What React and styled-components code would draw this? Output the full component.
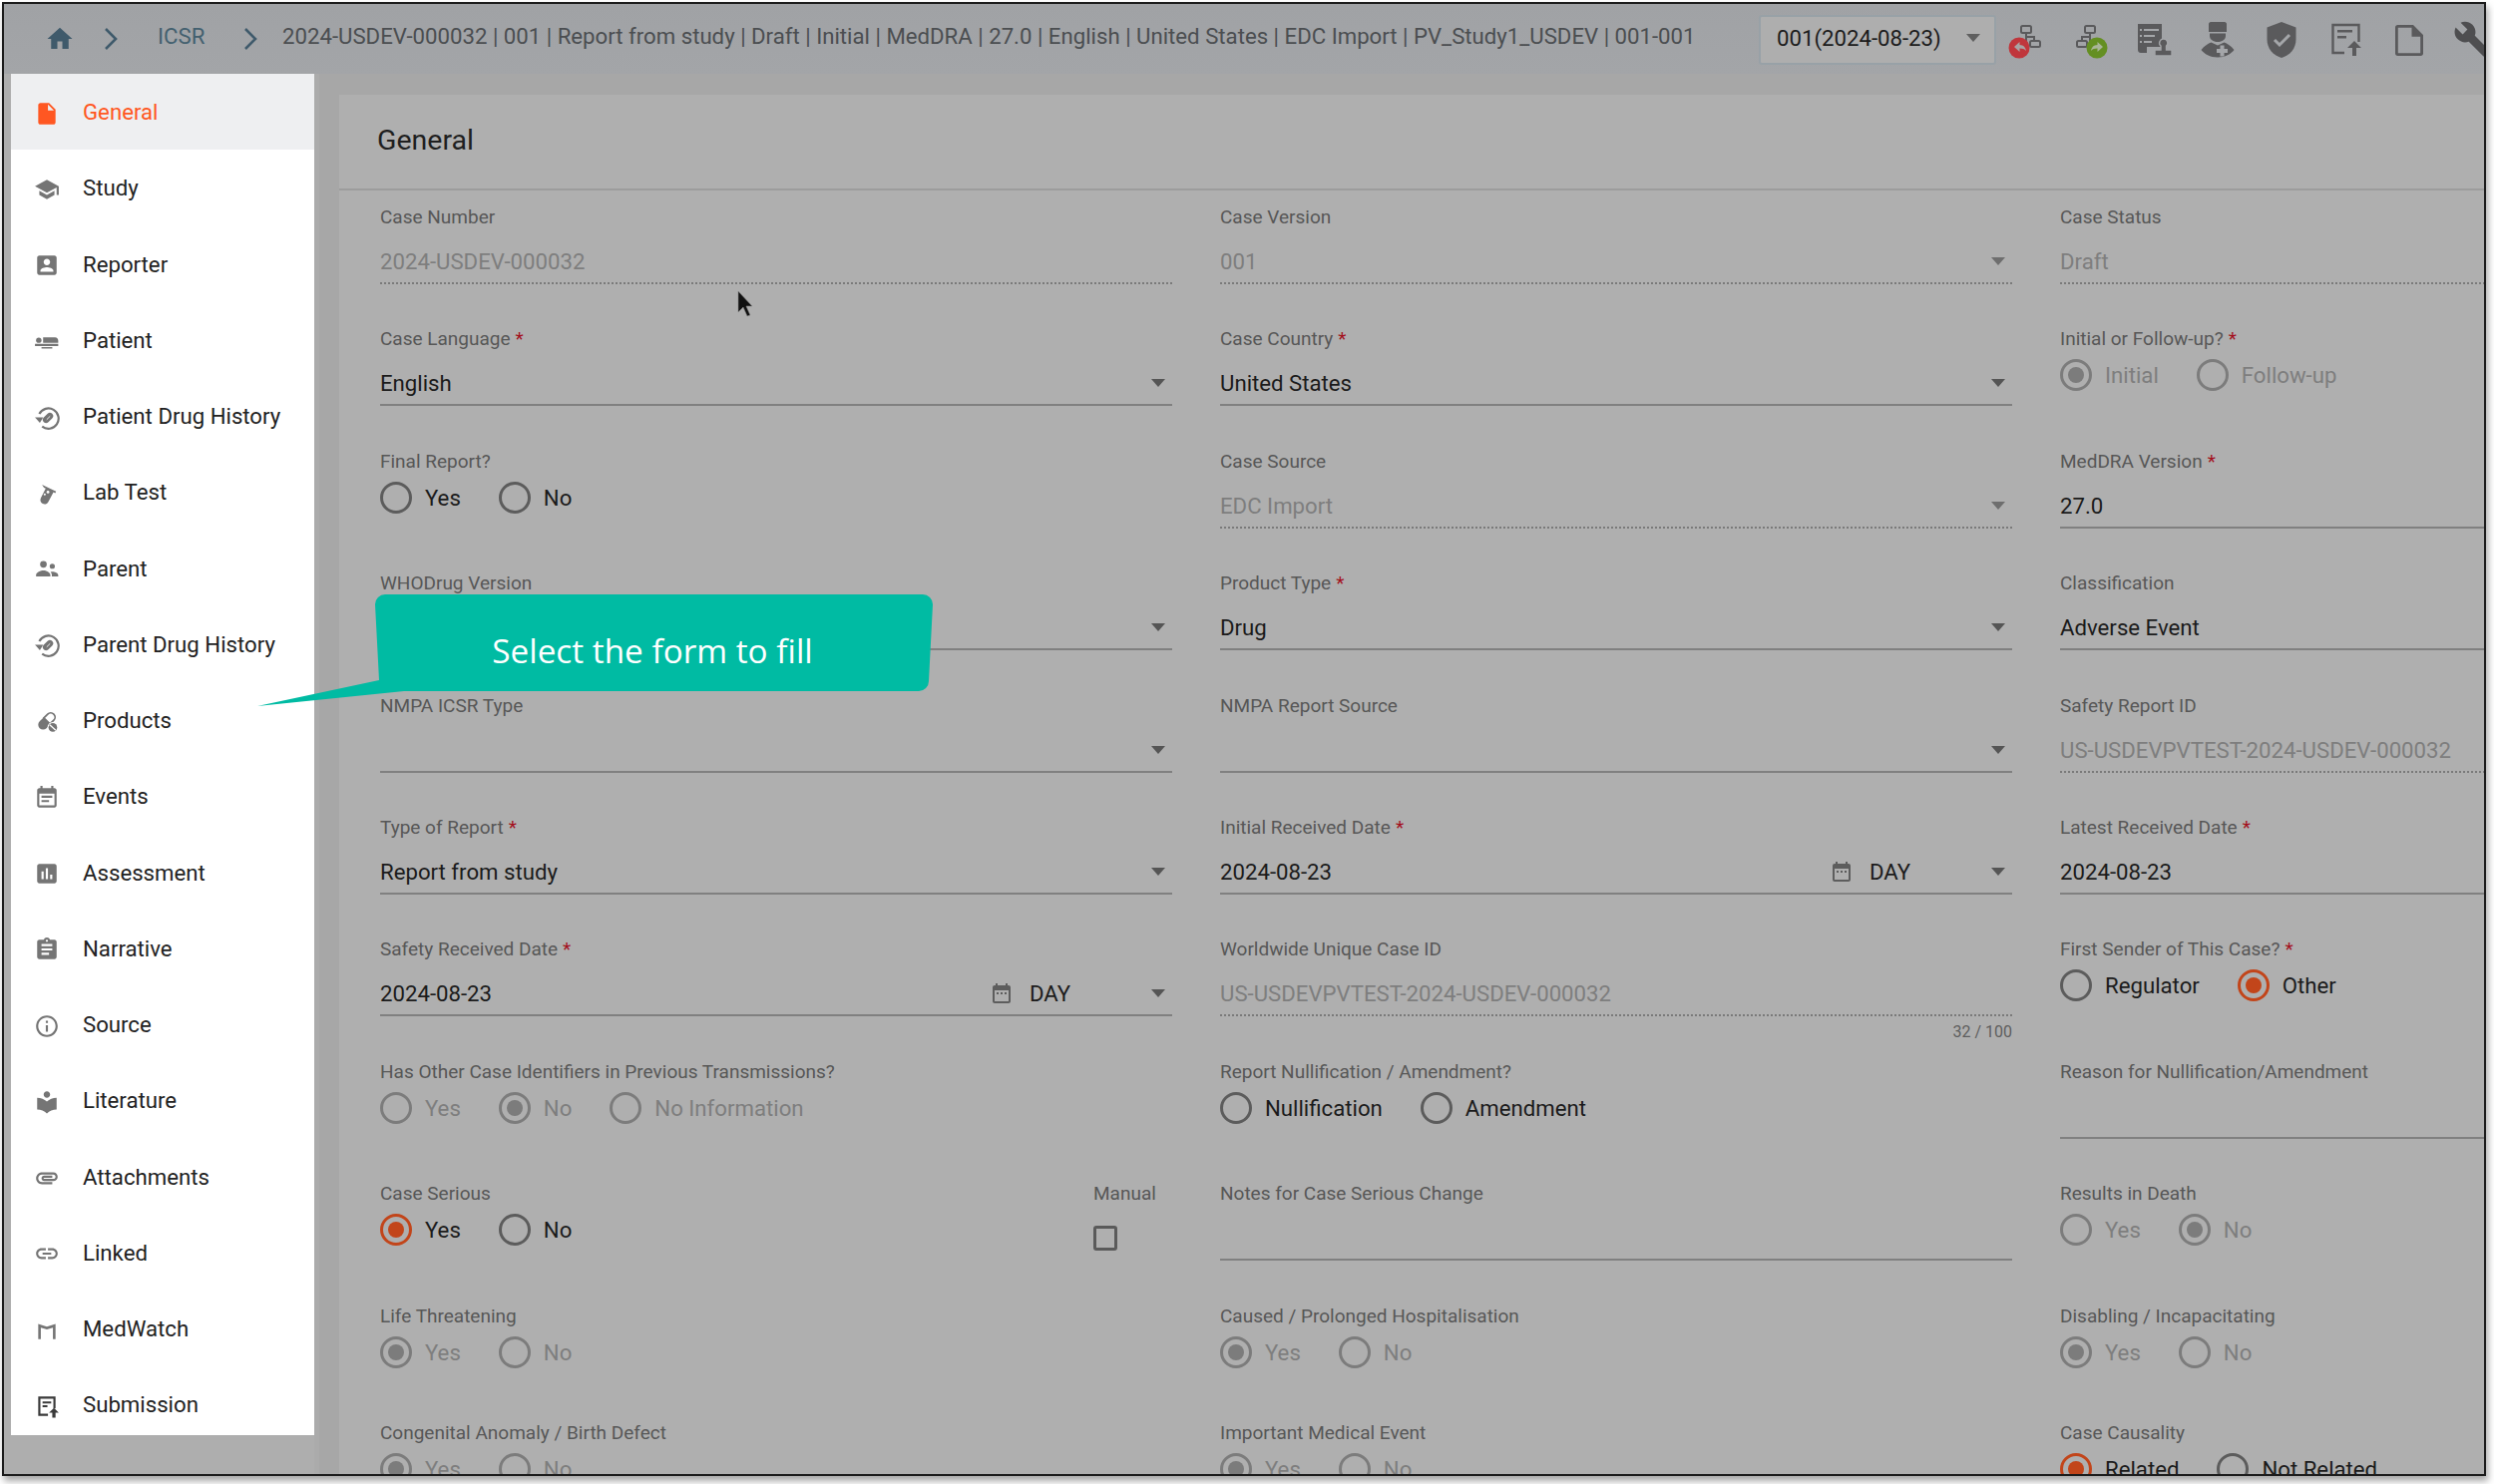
import React from "react";
import styled, { createGlobalStyle } from "styled-components";

const Global = createGlobalStyle`
  html, body { margin: 0; padding: 0; background: #fff; }
  body { font-family: Roboto, "Liberation Sans", sans-serif; }
  * { box-sizing: border-box; }
`;

const Page = styled.div`
  width: 2500px;
  height: 1488px;
  padding: 2px 0 0 2px;
  overflow: hidden;
`;
const Window = styled.div`
  position: relative;
  width: 2490px;
  height: 1478px;
  border: 2px solid #1c1c1c;
  box-shadow: 2px 5px 7px rgba(0, 0, 0, 0.35);
  background: #aeaeae;
  overflow: hidden;
  display: flex;
  flex-direction: column;
`;

/* top bar */
const TopBar = styled.header`
  flex: 0 0 70px;
  display: flex;
  align-items: center;
  padding-left: 41px;
  background: linear-gradient(#a0a2a5, #a3a5a8);
`;
const HomeIcon = styled.svg`
  width: 30px;
  height: 30px;
  fill: #3f5a6b;
  flex: none;
`;
const Chevron = styled.svg`
  width: 14px;
  height: 24px;
  fill: none;
  stroke: #3f5a6b;
  stroke-width: 2.6;
  flex: none;
  margin-left: ${(p) => p.$ml}px;
`;
const Crumb = styled.span`
  font-size: 22.2px;
  color: #43606f;
  margin: 0 0 6px 40px;
  width: 46px;
  flex: none;
`;
const CaseTitle = styled.span`
  flex: 0 0 1480px;
  margin: 0 0 6px 25px;
  font-size: 22.2px;
  color: #4b4e51;
  white-space: nowrap;
`;
const VersionSelect = styled.div`
  flex: 0 0 238px;
  height: 50px;
  margin-top: 1px;
  border: 2px solid #98a1a7;
  border-radius: 3px;
  background: #aeaeae;
  display: flex;
  align-items: center;
  justify-content: space-between;
  padding: 0 14px 4px 16px;
  font-size: 22.2px;
  color: #1c1c1c;
`;
const Caret = styled.span`
  width: 0;
  height: 0;
  flex: none;
  border-left: 7px solid transparent;
  border-right: 7px solid transparent;
  border-top: 8px solid ${(p) => p.$color || "#5f5f5f"};
`;
const ToolIcons = styled.div`
  display: flex;
  flex: none;
  margin-left: -2px;
`;
const ToolCell = styled.div`
  flex: 0 0 64px;
  display: flex;
  justify-content: center;
  padding-top: 1px;
`;
const ToolSvg = styled.svg`
  width: 40px;
  height: 40px;
  flex: none;
`;

/* body */
const Body = styled.div`
  flex: 1;
  min-height: 0;
  display: flex;
`;
const Sidebar = styled.nav`
  flex: 0 0 304px;
  margin-left: 7px;
  height: 1365px;
  background: #fff;
  overflow: hidden;
`;
const NavItem = styled.div`
  height: 76.25px;
  display: flex;
  align-items: center;
  padding-left: 23px;
  background: ${(p) => (p.$active ? "#eeeff1" : "#fff")};
  color: ${(p) => (p.$active ? "#ff5722" : "#222")};
`;
const NavIcon = styled.svg`
  width: 26px;
  height: 26px;
  flex: none;
  margin-top: 3px;
  fill: ${(p) => (p.$active ? "#ff5722" : p.$dark ? "#3a3a3a" : "#757575")};
`;
const NavLabel = styled.span`
  margin-left: 23px;
  font-size: 22.2px;
  white-space: nowrap;
`;
const Main = styled.main`
  flex: 1;
  min-width: 0;
  border-left: 5px solid #ababab;
  background: #a7a7a7;
  padding: 21px 0 0 20px;
`;
const Card = styled.section`
  width: 2200px;
  height: 1500px;
  background: #afafaf;
`;
const CardHeader = styled.div`
  height: 96px;
  padding: 0 0 3px 38px;
  display: flex;
  align-items: center;
  border-bottom: 2px solid #9c9c9c;
  font-size: 28.5px;
  color: #1f1f1f;
`;
const FormGrid = styled.div`
  display: grid;
  grid-template-columns: 794px 794px 794px;
  grid-template-rows: repeat(9, 122.4px) 117px 122px;
  column-gap: 48px;
  padding: 15px 0 0 41px;
`;
const Field = styled.div`
  min-width: 0;
  display: flex;
  flex-direction: column;
`;
const Label = styled.div`
  height: 24px;
  line-height: 24px;
  font-size: 19px;
  color: #575757;
  white-space: nowrap;
`;
const Req = styled.span`
  color: #a3101c;
  margin-left: 5px;
`;
const InputLine = styled.div`
  margin-top: 12px;
  height: 43px;
  padding: 0 7px 1px 0;
  display: flex;
  align-items: center;
  border-bottom: ${(p) => (p.$disabled ? "2px dotted #7a7a7a" : "2px solid #808080")};
  font-size: 22.2px;
  color: ${(p) => (p.$disabled ? "#7e7e7e" : "#1b1b1b")};
`;
const Value = styled.span`
  flex: 1;
  white-space: nowrap;
`;
const CalIcon = styled.svg`
  width: 24px;
  height: 24px;
  flex: none;
  fill: #5d5d5d;
  margin-right: 16px;
`;
const Unit = styled.span`
  width: 122px;
  flex: none;
`;
const Counter = styled.div`
  margin-top: 6px;
  text-align: right;
  font-size: 16px;
  color: #5e5e5e;
`;
const RadioRow = styled.div`
  display: flex;
  align-items: center;
  margin-top: 8px;
`;
const RadioSplit = styled.div`
  display: flex;
  justify-content: space-between;
`;
const ManualBox = styled.div`
  flex: 0 0 79px;
`;
const Check = styled.div`
  width: 24px;
  height: 25px;
  margin-top: 20px;
  border: 3px solid #5a5a5a;
  border-radius: 3px;
`;
const RadioItem = styled.div`
  display: flex;
  align-items: center;
  margin-right: 38px;
  font-size: 22.2px;
  color: ${(p) => (p.$disabled ? "#7e7e7e" : "#1b1b1b")};
`;
const RadioCircle = styled.span`
  width: 32px;
  height: 32px;
  flex: none;
  margin-right: 13px;
  border-radius: 50%;
  border: 3px solid ${(p) => (p.$disabled ? "#7c7c7c" : p.$on ? "#c2451a" : "#5c5c5c")};
  display: flex;
  align-items: center;
  justify-content: center;
`;
const RadioDot = styled.span`
  width: 16px;
  height: 16px;
  border-radius: 50%;
  background: ${(p) => (p.$disabled ? "#7c7c7c" : "#c2451a")};
`;

/* overlays */
const CalloutShape = styled.svg`
  position: absolute;
  left: 248px;
  top: 590px;
  width: 690px;
  height: 122px;
  fill: #00bba3;
`;
const CalloutText = styled.div`
  position: absolute;
  left: 372px;
  top: 600px;
  width: 556px;
  height: 96px;
  display: flex;
  align-items: center;
  justify-content: center;
  font-family: "Open Sans", sans-serif;
  font-size: 33.3px;
  color: #fff;
  white-space: nowrap;
`;
const Cursor = styled.svg`
  position: absolute;
  left: 733px;
  top: 287px;
  width: 18px;
  height: 28px;
`;

const P = ({ d, ...r }) => <path d={d} {...r} />;

const historyIcon = (
  <>
    <path d="M5 8.400A9.400 9.400 0 1 1 7.600 20" fill="none" stroke="#757575" strokeWidth="2" />
    <path d="M1 11.500h7.600L5.500 16.500z" />
    <rect x="7.500" y="9" width="11" height="6" rx="3" transform="rotate(-45 13 12)" />
    <path d="M11.800 13.600l3.200-3.200" stroke="#fff" strokeWidth=".8" />
  </>
);

const sideIcons = {
  file: <P d="M6 2c-1.1 0-1.99.9-1.99 2L4 20c0 1.1.89 2 1.99 2H18c1.1 0 2-.9 2-2V8l-6-6H6zm7 7V3.5L18.5 9H13z" />,
  school: <P d="M5 13.18v4L12 21l7-3.82v-4L12 17l-7-3.82zM12 3L1 9l11 6 9-4.91V17h2V9L12 3z" />,
  box: <P d="M3 5v14c0 1.1.89 2 2 2h14c1.1 0 2-.9 2-2V5c0-1.1-.9-2-2-2H5c-1.11 0-2 .9-2 2zm12 4c0 1.66-1.34 3-3 3s-3-1.34-3-3 1.34-3 3-3 3 1.34 3 3zm-9 8c0-2 4-3.1 6-3.1s6 1.1 6 3.1v1H6v-1z" />,
  patient: (
    <>
      <circle cx="4.5" cy="11.2" r="2.5" />
      <P d="M8.5 8.5h11c1.8 0 3 1.2 3 3.3v1.7h-14zM1 14.5h21.5v2H1zM7 17.5h10v1.5H7z" />
    </>
  ),
  history: historyIcon,
  flask: (
    <>
      <P d="M7.5 3.6l13 6.4-.8 1.5-1.6-.8-4.8 8.9c-1 1.9-3.2 2.7-5.2 1.7-2-1-2.7-3.3-1.7-5.3l4.5-8.8-1.6-.8z" />
      <circle cx="13" cy="10.5" r="1.3" fill="#fff" />
      <circle cx="10" cy="12.7" r="1" fill="#fff" />
    </>
  ),
  people: (
    <>
      <circle cx="8.8" cy="7.2" r="3.1" />
      <circle cx="17" cy="9" r="2.4" />
      <P d="M2 18.5v-1.2c0-2.7 4.3-4.3 6.8-4.3s6.4 1.6 6.4 4.3v1.2zM16.6 18.5v-1.6c0-1-.4-1.9-1.2-2.7.6-.1 1.2-.2 1.7-.2 2 0 5.4 1.1 5.4 3.2v1.3z" />
    </>
  ),
  pill: (
    <>
      <g transform="rotate(-45 12 11)">
        <path d="M2.500 11a4.500 4.500 0 0 1 4.500-4.500h5v9H7A4.500 4.500 0 0 1 2.500 11z" />
        <path d="M12 7h5a4 4 0 0 1 0 8h-5z" fill="#fff" stroke="#757575" strokeWidth="1.600" />
      </g>
      <circle cx="17.500" cy="17" r="5" fill="#fff" />
      <circle cx="17.500" cy="17" r="4" />
      <path d="M14.600 14.600l5.600 5" stroke="#fff" strokeWidth="1.200" />
    </>
  ),
  event: <P d="M17 10H7v2h10v-2zm2-7h-1V1h-2v2H8V1H6v2H5c-1.11 0-1.99.9-1.99 2L3 19c0 1.1.89 2 2 2h14c1.1 0 2-.9 2-2V5c0-1.1-.9-2-2-2zm0 16H5V8h14v11zm-5-5H7v2h7v-2z" />,
  chart: <P d="M19 3H5c-1.1 0-2 .9-2 2v14c0 1.1.9 2 2 2h14c1.1 0 2-.9 2-2V5c0-1.1-.9-2-2-2zM9 17H7v-7h2v7zm4 0h-2V7h2v10zm4 0h-2v-4h2v4z" />,
  assign: <P d="M19 3h-4.18C14.4 1.84 13.3 1 12 1c-1.3 0-2.4.84-2.82 2H5c-1.1 0-2 .9-2 2v14c0 1.1.9 2 2 2h14c1.1 0 2-.9 2-2V5c0-1.1-.9-2-2-2zm-7 0c.55 0 1 .45 1 1s-.45 1-1 1-1-.45-1-1 .45-1 1-1zm2 14H7v-2h7v2zm3-4H7v-2h10v2zm0-4H7V7h10v2z" />,
  info: <P d="M11 7h2v2h-2zm0 4h2v6h-2zm1-9C6.48 2 2 6.48 2 12s4.48 10 10 10 10-4.48 10-10S17.52 2 12 2zm0 18c-4.41 0-8-3.59-8-8s3.59-8 8-8 8 3.59 8 8-3.59 8-8 8z" />,
  library: <P d="M12 11.55C9.64 9.35 6.48 8 3 8v11c3.48 0 6.64 1.35 9 3.55 2.36-2.19 5.52-3.55 9-3.55V8c-3.48 0-6.64 1.35-9 3.55zM12 8c1.66 0 3-1.34 3-3s-1.34-3-3-3-3 1.34-3 3 1.34 3 3 3z" />,
  attach: <P d="M2 12.5C2 9.46 4.46 7 7.5 7H18c2.21 0 4 1.79 4 4s-1.79 4-4 4H9.5C8.12 15 7 13.88 7 12.5S8.12 10 9.5 10H17v2H9.41c-.55 0-.55 1 0 1H18c1.1 0 2-.9 2-2s-.9-2-2-2H7.5C5.57 9 4 10.57 4 12.5S5.57 16 7.5 16H17v2H7.5C4.46 18 2 15.54 2 12.5z" />,
  link: <P d="M3.9 12c0-1.71 1.39-3.1 3.1-3.1h4V7H7c-2.76 0-5 2.24-5 5s2.24 5 5 5h4v-1.9H7c-1.71 0-3.1-1.39-3.1-3.1zM8 13h8v-2H8v2zm9-6h-4v1.9h4c1.71 0 3.1 1.39 3.1 3.1s-1.39 3.1-3.1 3.1h-4V17h4c2.76 0 5-2.24 5-5s-2.24-5-5-5z" />,
  medwatch: <P d="M4 6l8 2.6L20 6v14h-2.4V9.4L12 11 6.4 9.4V20H4z" />,
  submit: (
    <>
      <P d="M4 3h16v11h-2V5H6v14h7v2H4zM8 7.5h8v2H8zM8 11h4.5v2H8z" />
      <P d="M18.5 13.5l4.5 4.5h-3v4.5h-3V18h-3z" />
    </>
  ),
};

const nav = [
  ["General", "file"],
  ["Study", "school"],
  ["Reporter", "box"],
  ["Patient", "patient"],
  ["Patient Drug History", "history"],
  ["Lab Test", "flask"],
  ["Parent", "people"],
  ["Parent Drug History", "history"],
  ["Products", "pill"],
  ["Events", "event"],
  ["Assessment", "chart"],
  ["Narrative", "assign"],
  ["Source", "info"],
  ["Literature", "library"],
  ["Attachments", "attach"],
  ["Linked", "link"],
  ["MedWatch", "medwatch"],
  ["Submission", "submit"],
];

const gray = "#5a5a5c";

const OrgChart = ({ flip }) => (
  <g fill="none" stroke={gray} strokeWidth="2">
    <rect x="15" y="6" width="10" height="7" rx="1.500" />
    <path d={flip ? "M20 13v8M20 17h-8v4" : "M20 13v8M20 17h8v4"} />
    <rect x={flip ? 7 : 24} y="21" width="10" height="6" rx="1.500" />
  </g>
);

const toolIcons = [
  <>
    <OrgChart />
    <circle cx="13" cy="28" r="10.500" fill="#c0363c" />
    <path d="M8 27l5.500-5v3c4 .2 6 2.600 6.500 6-1.600-2-3.500-2.600-6.500-2.600V32z" fill="#a9a3a3" />
  </>,
  <>
    <OrgChart flip />
    <circle cx="27" cy="28" r="10.500" fill="#648f22" />
    <path d="M33 27l-5.500-5v3c-4 .2-6 2.600-6.500 6 1.600-2 3.500-2.600 6.500-2.600V32z" fill="#a9b598" />
  </>,
  <>
    <path d="M4 4h24v23H13v6H7c-1.700 0-3-1.300-3-3z" fill={gray} />
    <path d="M10 9h15v2H10zM10 15h11v2H10zM10 21h8v2H10z" fill="#a4a6a9" />
    <path d="M6 9h2v2H6zM6 15h2v2H6zM6 21h2v2H6z" fill="#a4a6a9" />
    <path d="M30 19a4 4 0 0 1 2.500 7v4H38v6H21v-6h6v-4a4 4 0 0 1 3-7z" fill={gray} stroke="#a4a6a9" strokeWidth="1.400" />
  </>,
  <>
    <path d="M13 2h14c1 0 2 1 2 2v8H11V4c0-1 1-2 2-2z" fill={gray} />
    <path d="M12 13.500h16V16c0 3.500-3.500 6-8 6s-8-2.500-8-6z" fill={gray} />
    <path d="M3.500 30c3-4 7-6.500 10-7.500l6.500 3 6.500-3c3 1 7 3.500 10 7.500-3 4-9 7.500-16.500 7.500S6.500 34 3.500 30z" fill={gray} />
    <path d="M22.500 25.500h4v3.500h3.500v4h-3.500v3.500h-4V33H19v-4h3.500z" fill="#a4a6a9" />
  </>,
  <>
    <path d="M20 2l14.500 5.500v12c0 9-6 16-14.500 18.500C11.500 35.500 5.500 28.500 5.500 19.500v-12z" fill={gray} />
    <path d="M13 20l5 5 10-10" fill="none" stroke="#a4a6a9" strokeWidth="3" />
  </>,
  <>
    <path d="M19 33H7.500V5h26v17" fill="none" stroke={gray} strokeWidth="2.400" />
    <path d="M12 10h15v2.600H12zM12 16h9v2.600H12z" fill={gray} />
    <path d="M29 21l7 7h-5v8h-4v-8h-5z" fill={gray} />
  </>,
  <path d="M24 5H8.500C7 5 6 6 6 7.500v26C6 35 7 36 8.500 36h23c1.500 0 2.500-1 2.500-2.500V15zM8.800 33.200V7.800h13.700v9h8.700v16.400z" fill={gray} />,
  <path
    d="M22.700 19l-9.100-9.100c.9-2.300.4-5-1.500-6.900-2-2-5-2.400-7.400-1.300L9 6 6 9 1.600 4.700C.4 7.100.9 10.100 2.900 12.100c1.900 1.900 4.600 2.400 6.900 1.500l9.100 9.100c.4.400 1 .4 1.400 0l2.300-2.300c.5-.4.500-1.100.1-1.400z"
    fill="#4e4e50"
    transform="scale(1.600)"
  />,
];

const req = true;
const radios = (label, disabled, opts, on, r) => ({ type: "radio", label, disabled, opts, on, req: r });
const yn = (label, disabled, on) => radios(label, disabled, ["Yes", "No"], on);
const txt = (label, value, disabled, r) => ({ type: "text", label, value, disabled, req: r });
const sel = (label, value, disabled, r) => ({ type: "select", label, value, disabled, req: r });
const date = (label, value) => ({ type: "date", label, value, req });

const fields = [
  txt("Case Number", "2024-USDEV-000032", true),
  sel("Case Version", "001", true),
  txt("Case Status", "Draft", true),

  sel("Case Language", "English", false, req),
  sel("Case Country", "United States", false, req),
  radios("Initial or Follow-up?", true, ["Initial", "Follow-up"], "Initial", req),

  yn("Final Report?", false),
  sel("Case Source", "EDC Import", true),
  txt("MedDRA Version", "27.0", false, req),

  sel("WHODrug Version", ""),
  sel("Product Type", "Drug", false, req),
  txt("Classification", "Adverse Event"),

  sel("NMPA ICSR Type", ""),
  sel("NMPA Report Source", ""),
  txt("Safety Report ID", "US-USDEVPVTEST-2024-USDEV-000032", true),

  sel("Type of Report", "Report from study", false, req),
  date("Initial Received Date", "2024-08-23"),
  txt("Latest Received Date", "2024-08-23", false, req),

  date("Safety Received Date", "2024-08-23"),
  { ...txt("Worldwide Unique Case ID", "US-USDEVPVTEST-2024-USDEV-000032", true), counter: "32 / 100" },
  radios("First Sender of This Case?", false, ["Regulator", "Other"], "Other", req),

  radios("Has Other Case Identifiers in Previous Transmissions?", true, ["Yes", "No", "No Information"], "No"),
  radios("Report Nullification / Amendment?", false, ["Nullification", "Amendment"]),
  txt("Reason for Nullification/Amendment", ""),

  { ...yn("Case Serious", false, "Yes"), manual: true },
  txt("Notes for Case Serious Change", ""),
  yn("Results in Death", true, "No"),

  yn("Life Threatening", true, "Yes"),
  yn("Caused / Prolonged Hospitalisation", true, "Yes"),
  yn("Disabling / Incapacitating", true, "Yes"),

  yn("Congenital Anomaly / Birth Defect", true, "Yes"),
  yn("Important Medical Event", true, "Yes"),
  radios("Case Causality", false, ["Related", "Not Related"], "Related"),
];

const FieldLabel = ({ f }) => (
  <Label>
    {f.label}
    {f.req && <Req>*</Req>}
  </Label>
);

const Radios = ({ f }) => (
  <RadioRow>
    {f.opts.map((o) => (
      <RadioItem key={o} $disabled={f.disabled}>
        <RadioCircle $disabled={f.disabled} $on={f.on === o}>
          {f.on === o && <RadioDot $disabled={f.disabled} />}
        </RadioCircle>
        {o}
      </RadioItem>
    ))}
  </RadioRow>
);

const FormField = ({ f }) => {
  if (f.type === "radio") {
    if (f.manual) {
      return (
        <RadioSplit>
          <Field>
            <FieldLabel f={f} />
            <Radios f={f} />
          </Field>
          <ManualBox>
            <Label>Manual</Label>
            <Check />
          </ManualBox>
        </RadioSplit>
      );
    }
    return (
      <Field>
        <FieldLabel f={f} />
        <Radios f={f} />
      </Field>
    );
  }
  return (
    <Field>
      <FieldLabel f={f} />
      <InputLine $disabled={f.disabled}>
        <Value>{f.value}</Value>
        {f.type === "date" && (
          <>
            <CalIcon viewBox="0 0 24 24">
              <path d="M9 11H7v2h2v-2zm4 0h-2v2h2v-2zm4 0h-2v2h2v-2zm2-7h-1V2h-2v2H8V2H6v2H5c-1.110 0-1.990.9-1.990 2L3 20c0 1.100.89 2 2 2h14c1.100 0 2-.9 2-2V6c0-1.100-.9-2-2-2zm0 16H5V9h14v11z" />
            </CalIcon>
            <Unit>DAY</Unit>
          </>
        )}
        {(f.type === "select" || f.type === "date") && <Caret $color={f.disabled ? "#6e6e6e" : "#555"} />}
      </InputLine>
      {f.counter && <Counter>{f.counter}</Counter>}
    </Field>
  );
};

export default function App() {
  return (
    <>
      <Global />
      <Page>
        <Window>
          <TopBar>
            <HomeIcon viewBox="0 0 24 24">
              <path d="M10 20v-6h4v6h5v-8h3L12 3 2 12h3v8z" />
            </HomeIcon>
            <Chevron viewBox="0 0 14 24" $ml={29}>
              <path d="M2 2l10 10L2 22" />
            </Chevron>
            <Crumb>ICSR</Crumb>
            <Chevron viewBox="0 0 14 24" $ml={40}>
              <path d="M2 2l10 10L2 22" />
            </Chevron>
            <CaseTitle>
              2024-USDEV-000032 | 001 | Report from study | Draft | Initial | MedDRA | 27.0 | English | United States | EDC Import | PV_Study1_USDEV | 001-001
            </CaseTitle>
            <VersionSelect>
              001(2024-08-23)
              <Caret />
            </VersionSelect>
            <ToolIcons>
              {toolIcons.map((ic, i) => (
                <ToolCell key={i}>
                  <ToolSvg viewBox="0 0 40 40">{ic}</ToolSvg>
                </ToolCell>
              ))}
            </ToolIcons>
          </TopBar>
          <Body>
            <Sidebar>
              {nav.map(([label, ic], i) => (
                <NavItem key={label} $active={i === 0}>
                  <NavIcon viewBox="0 0 24 24" $active={i === 0} $dark={ic === "submit"}>
                    {sideIcons[ic]}
                  </NavIcon>
                  <NavLabel>{label}</NavLabel>
                </NavItem>
              ))}
            </Sidebar>
            <Main>
              <Card>
                <CardHeader>General</CardHeader>
                <FormGrid>
                  {fields.map((f) => (
                    <FormField key={f.label} f={f} />
                  ))}
                </FormGrid>
              </Card>
            </Main>
          </Body>
          <CalloutShape viewBox="0 0 690 122">
            <path d="M134 2a10 10 0 0 0-10 10l4 76L6 114 153 99H669a10 10 0 0 0 10-10l4-77a10 10 0 0 0-10-10z" />
          </CalloutShape>
          <CalloutText>Select the form to fill</CalloutText>
          <Cursor viewBox="0 0 18 28">
            <path d="M3 1v21l5-5 4 9 3-1-4-9h6z" fill="#111" stroke="#888" strokeWidth=".6" />
          </Cursor>
        </Window>
      </Page>
    </>
  );
}
